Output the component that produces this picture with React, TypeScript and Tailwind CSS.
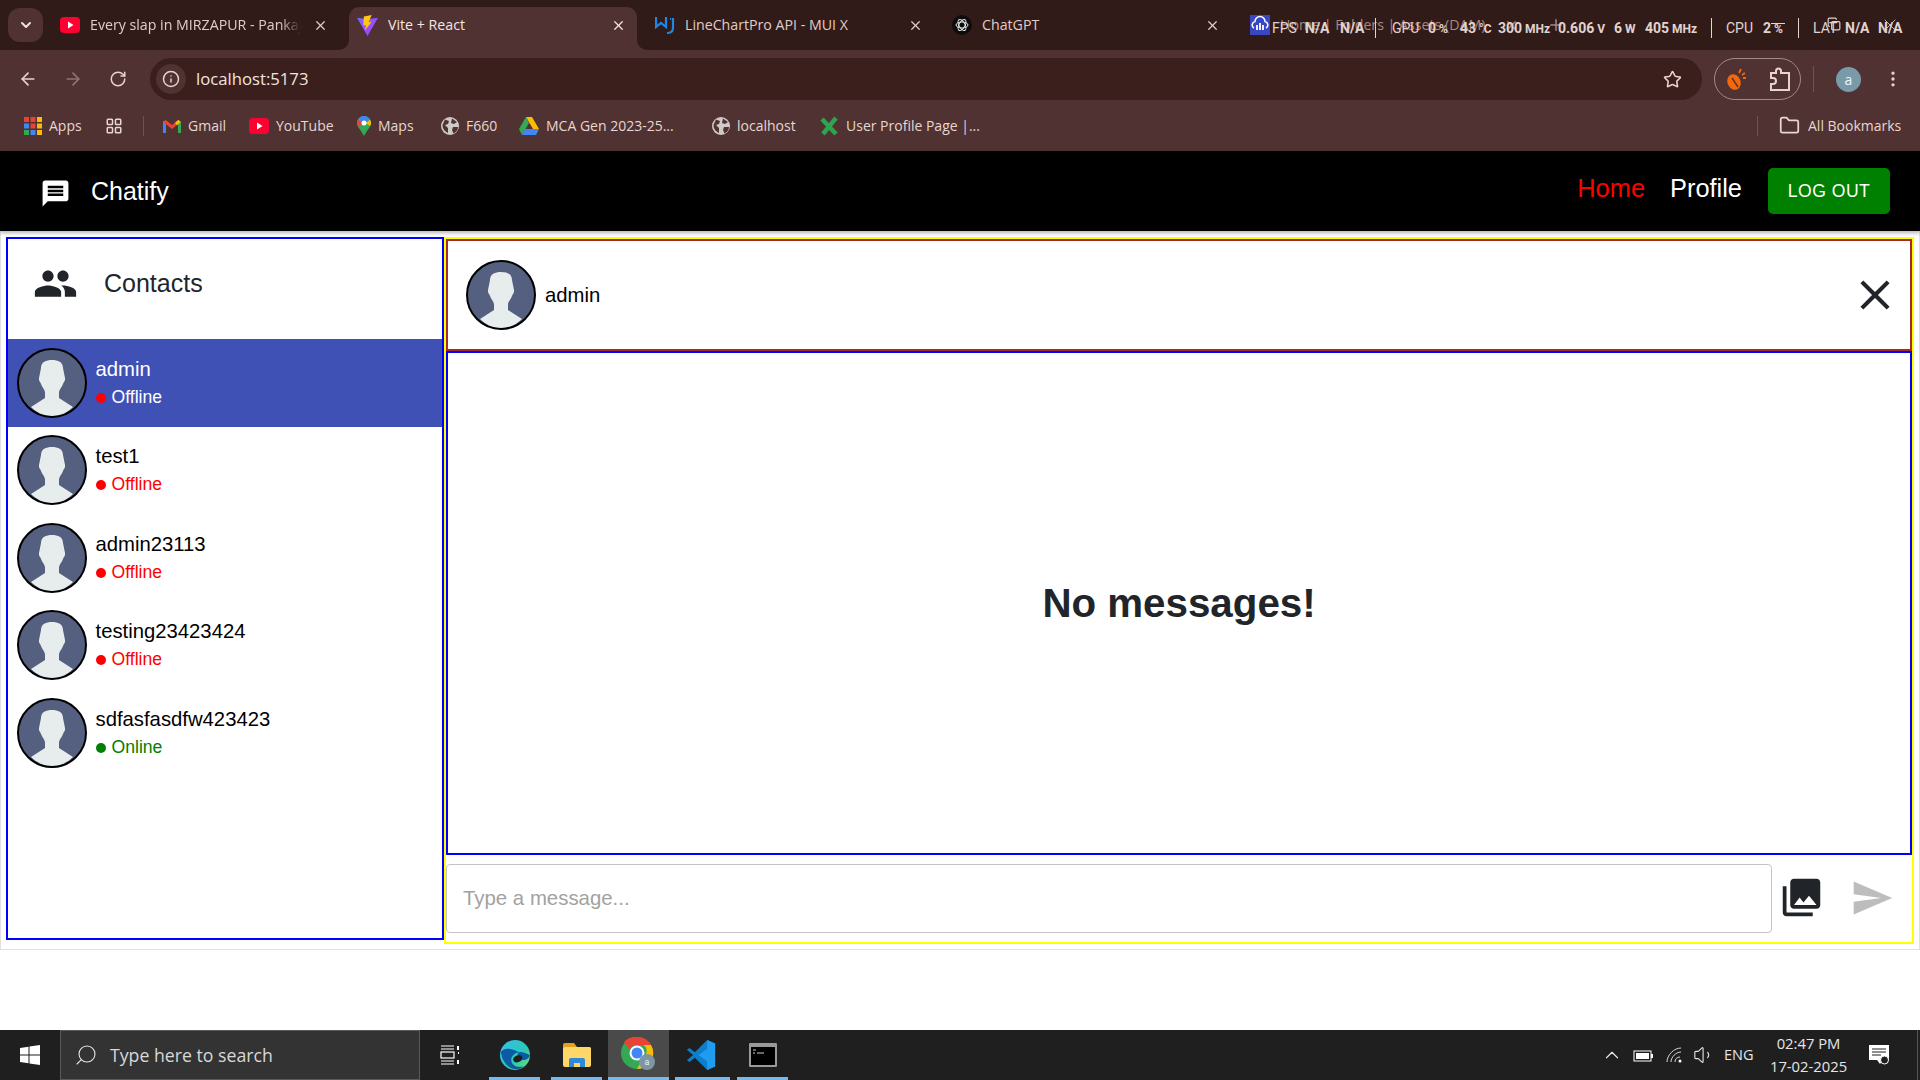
import React from "react";
import {
  ArrowLeft,
  ArrowRight,
  ChevronDown,
  ChevronUp,
  Copy,
  Folder,
  Info,
  LayoutGrid,
  MoreVertical,
  Plus,
  RotateCw,
  Search,
  Star,
  Volume1,
  X,
} from "lucide-react";

const UI_FONT = "font-['Open_Sans','Noto_Sans',sans-serif]";

const contacts = [
  { name: "admin", online: false, selected: true },
  { name: "test1", online: false },
  { name: "admin23113", online: false },
  { name: "testing23423424", online: false },
  { name: "sdfasfasdfw423423", online: true },
];

const YoutubeIcon = () => (
  <svg width="20" height="20" viewBox="0 0 20 20">
    <rect x="0" y="2" width="20" height="16" rx="4" fill="#ff0033" />
    <path d="M8 6.500v7l5.500-3.500z" fill="#fff" />
  </svg>
);

const ViteIcon = () => (
  <svg width="21" height="21" viewBox="0 0 20 20">
    <defs>
      <linearGradient id="vite-a" x1="0" y1="0" x2="1" y2="1">
        <stop offset="0" stopColor="#6f6cff" />
        <stop offset="1" stopColor="#bd34fe" />
      </linearGradient>
    </defs>
    <path d="M0 2.500 10 20 20 2.500 10 4z" fill="url(#vite-a)" />
    <path d="M14 0 6.500 1.500 6 10l2.500-.5-.8 5L14 6.500l-3 .5z" fill="#ffc517" />
  </svg>
);

const MuiIcon = () => (
  <svg width="20" height="20" viewBox="0 0 20 20" fill="none" stroke="#1e88e5" strokeWidth="2.2">
    <path d="M1 2v10l5-4 5 4V2" />
    <path d="M18 3v10c0 3-2 5-6 5" />
    <path d="M15 4h1" />
  </svg>
);

const GptIcon = () => (
  <svg width="20" height="20" viewBox="0 0 20 20" fill="none">
    <circle cx="10" cy="10" r="10" fill="#0d0d0d" />
    <g stroke="#e8e8e8" strokeWidth="1">
      <ellipse cx="10" cy="10" rx="6" ry="3" />
      <ellipse cx="10" cy="10" rx="6" ry="3" transform="rotate(60 10 10)" />
      <ellipse cx="10" cy="10" rx="6" ry="3" transform="rotate(120 10 10)" />
    </g>
  </svg>
);

const CloudIcon = () => (
  <svg width="20" height="20" viewBox="0 0 20 20">
    <rect width="20" height="20" fill="#3847c4" />
    <path d="M4 13a3.500 3.500 0 0 1 1-6.500 5 5 0 0 1 10 0 3.500 3.500 0 0 1 1 6.500" fill="none" stroke="#fff" strokeWidth="1.5" />
    <path d="M7 10v5M10 8v7M13 10v5" stroke="#fff" strokeWidth="1.8" />
  </svg>
);

const AppsIcon = () => (
  <svg width="18" height="18" viewBox="0 0 18 18">
    {["#ea4335", "#ea4335", "#fbbc04", "#4285f4", "#ea4335", "#fbbc04", "#34a853", "#4285f4", "#fbbc04"].map((c, i) => (
      <rect key={i} x={(i % 3) * 6.5} y={Math.floor(i / 3) * 6.5} width="5" height="5" fill={c} />
    ))}
  </svg>
);

const GmailIcon = () => (
  <svg width="18" height="16" viewBox="0 0 18 16" fill="none">
    <path d="M1.500 15V3" stroke="#4285f4" strokeWidth="3" />
    <path d="M16.500 15V3" stroke="#34a853" strokeWidth="3" />
    <path d="M1.500 3 9 9l7.500-6" stroke="#ea4335" strokeWidth="3" />
    <path d="M16.500 3 13 6" stroke="#fbbc04" strokeWidth="3" />
  </svg>
);

const MapsIcon = () => (
  <svg width="14" height="20" viewBox="0 0 14 20">
    <path d="M7 0a7 7 0 0 1 7 7c0 4-4 7-7 13C4 14 0 11 0 7a7 7 0 0 1 7-7z" fill="#34a853" />
    <path d="M7 0a7 7 0 0 1 6 3.500L2 10 1 4a7 7 0 0 1 6-4z" fill="#4285f4" />
    <path d="M1 3.500 5 7l-3 4a8 8 0 0 1-2-4 7 7 0 0 1 1-3.500z" fill="#ea4335" />
    <path d="M13 3.500a7 7 0 0 1 1 3.500c0 1-.3 2-1 3L9 7z" fill="#fbbc04" />
    <circle cx="7" cy="7" r="2.500" fill="#fff" />
  </svg>
);

const DriveIcon = () => (
  <svg width="20" height="18" viewBox="0 0 20 18">
    <path d="M7 0h6l7 12h-6z" fill="#fbbc04" />
    <path d="M7 0 0 12l3 6 7-12z" fill="#34a853" />
    <path d="M3 18h14l3-6H6z" fill="#4285f4" />
  </svg>
);

const XLogoIcon = () => (
  <svg width="20" height="20" viewBox="0 0 20 20" fill="none" stroke="#2ea44f" strokeWidth="4.5">
    <path d="M3 3l14 15" />
    <path d="M17 2 4 18" />
  </svg>
);

// the grey default favicon chrome shows for sites without one
const GlobeFilled = () => (
  <svg width="18" height="18" viewBox="0 0 18 18">
    <circle cx="9" cy="9" r="9" fill="#cfc9c8" />
    <path d="M4 2.500 8 4 7 7 4 8l3 3v5C3 14 1.500 11 1.500 8zM11 1.500l5 3.500-3 2-3-1zM12 10h5c0 3-2 5.500-4.500 6.500L11 13z" fill="#4f3231" />
  </svg>
);

const MetamaskIcon = () => (
  <svg width="22" height="24" viewBox="0 0 22 24">
    <ellipse cx="9" cy="15" rx="6.500" ry="8" fill="#f4680b" transform="rotate(-22 9 15)" />
    <path d="M7 11l6 9" stroke="#4f3231" strokeWidth="1.4" />
    <path d="M14 6l2-4M17 8l3-2M18 11h3" stroke="#f4680b" strokeWidth="1.8" />
  </svg>
);

const PuzzleIcon = () => (
  <svg width="20" height="24" viewBox="0 0 20 24" fill="none" stroke="#e8d3ce" strokeWidth="2">
    <path d="M1 6h5V4a2.500 2.500 0 0 1 5 0v2h8v17H1v-6h2a3 3 0 0 0 0-6H1z" />
  </svg>
);

const WinLogo = () => (
  <svg width="20" height="20" viewBox="0 0 20 20" fill="#fff">
    <path d="M0 3 8.500 1.800V9.500H0zM9.500 1.600 20 0v9.500H9.500zM0 10.500h8.500v7.700L0 17zM9.500 10.500H20V20L9.500 18.400z" />
  </svg>
);

const TaskViewIcon = () => (
  <svg width="20" height="20" viewBox="0 0 20 20" fill="none" stroke="#fff" strokeWidth="1.2">
    <path d="M1 1h13M1 4h13M1 16h13M1 19h13" />
    <rect x="1" y="7" width="13" height="6" />
    <path d="M18 1v4M18 8h1M18 15v4" strokeWidth="2" />
  </svg>
);

const EdgeIcon = () => (
  <svg width="30" height="30" viewBox="0 0 32 32">
    <defs>
      <linearGradient id="edge-a" x1="0" y1="0" x2="1" y2="1">
        <stop offset="0" stopColor="#35c1f1" />
        <stop offset="0.6" stopColor="#2bc7b3" />
        <stop offset="1" stopColor="#78e26c" />
      </linearGradient>
    </defs>
    <circle cx="16" cy="16" r="16" fill="url(#edge-a)" />
    <path d="M1 13C3 28 16 36 26 28c-8 2-14-1-14-7 0-5 6-9 12-8 4 1 8 3 8 3C29 26 14 20 20 13 12 8 3 8 1 13z" fill="#0c59a4" />
    <ellipse cx="19" cy="20" rx="5" ry="3.500" fill="#1e1e1e" transform="rotate(-25 19 20)" />
  </svg>
);

const FolderIcon = () => (
  <svg width="28" height="24" viewBox="0 0 28 24">
    <path d="M0 2a2 2 0 0 1 2-2h9l3 4h12a2 2 0 0 1 2 2v4H0z" fill="#e2a21f" />
    <rect y="4" width="28" height="20" rx="2" fill="#ffd768" />
    <path d="M6 17a2 2 0 0 1 2-2h12a2 2 0 0 1 2 2v7h-5v-4h-6v4H6z" fill="#2f88d8" />
  </svg>
);

const ChromeIcon = () => (
  <svg width="36" height="36" viewBox="0 0 36 36">
    <circle cx="16" cy="16" r="16" fill="#34a853" />
    <path d="M16 0a16 16 0 0 1 14 8H16a8 8 0 0 0-7.500 5L3 5a16 16 0 0 1 13-5z" fill="#ea4335" />
    <path d="M30 8a16 16 0 0 1-14 24l7-12a8 8 0 0 0 0-12z" fill="#fbbc04" />
    <circle cx="16" cy="16" r="7.500" fill="#fff" />
    <circle cx="16" cy="16" r="5.500" fill="#4285f4" />
    <circle cx="26" cy="25" r="8" fill="#7d95a4" />
    <text x="26" y="28" fontSize="9" textAnchor="middle" fill="#e8eef2" fontFamily="Roboto, sans-serif">a</text>
  </svg>
);

const VscodeIcon = () => (
  <svg width="30" height="30" viewBox="0 0 32 34" className="mr-[4px]">
    <path d="M23 0 32 4v26l-9 4L9 20l-6 5-3-2 7-6-7-6 3-2 6 5z" fill="#0b7fcc" />
    <path d="M23 0 32 4v26l-9 4V24L13 17l10-7z" fill="#1f9cf0" />
  </svg>
);

const TerminalIcon = () => (
  <svg width="28" height="24" viewBox="0 0 28 24">
    <rect width="28" height="24" rx="1" fill="#9a9a9a" />
    <rect x="2" y="4" width="24" height="18" fill="#000" />
    <path d="M4 7h3M4 10h2M8 10h7" stroke="#ccc" strokeWidth="1" />
  </svg>
);

const NotificationIcon = () => (
  <svg width="20" height="20" viewBox="0 0 20 20">
    <path d="M0 0h20v15h-6l-3 4-3-4H0z" fill="#fff" />
    <path d="M3 4h14M3 7h14M3 10h9" stroke="#1f1f1f" strokeWidth="1" />
    <circle cx="15.500" cy="15" r="4" fill="#1f1f1f" stroke="#fff" strokeWidth="1" />
  </svg>
);

const MuiPath = ({ d, size, className }: { d: string; size: string; className: string }) => (
  <svg viewBox="0 0 24 24" className={`${size} ${className} shrink-0`} fill="currentColor">
    <path d={d} />
  </svg>
);

const Avatar = () => (
  <div className="w-[70px] h-[70px] rounded-full border-2 border-black overflow-hidden bg-[#555f7f] shrink-0">
    <svg viewBox="0 0 66 66" className="w-full h-full">
      <path
        d="M22 18c0-6 5-8 11-8s11 2 11 8l2 10c.5 3-1.500 4-2 6-.8 3-3.500 5-4 8v6l14 9c-5 5-12 9-21 9s-16-4-21-9l14-9v-6c-.5-3-3.200-5-4-8-.5-2-2.500-3-2-6z"
        fill="#e7eced"
      />
    </svg>
  </div>
);

type TabProps = {
  className: string;
  closeClass: string;
  icon: React.ReactNode;
  title: string;
  active?: boolean;
  fade?: boolean;
  dim?: boolean;
};

const Tab = ({ className, closeClass, icon, title, active, fade, dim }: TabProps) => (
  <div
    className={`relative h-[43px] mt-[7px] pb-[7px] flex items-center shrink-0 ${className} ${
      active ? "bg-[#4f3231] rounded-t-[10px] text-[#f5e6e3]" : dim ? "text-[#a8877f]" : "text-[#e2cbc6]"
    }`}
  >
    {active && (
      <>
        <svg width="10" height="10" viewBox="0 0 10 10" className="absolute left-[-10px] bottom-0">
          <path d="M10 0v10H0a10 10 0 0 0 10-10z" fill="#4f3231" />
        </svg>
        <svg width="10" height="10" viewBox="0 0 10 10" className="absolute right-[-10px] bottom-0">
          <path d="M0 0v10h10A10 10 0 0 1 0 0z" fill="#4f3231" />
        </svg>
      </>
    )}
    {icon}
    <span
      className={`ml-[10px] text-[14.2px] whitespace-nowrap overflow-hidden flex-1 ${
        fade ? "[mask-image:linear-gradient(to_right,black_90%,transparent)]" : ""
      }`}
    >
      {title}
    </span>
    <X size={15} strokeWidth={2} className={`shrink-0 ml-[12px] ${closeClass}`} />
  </div>
);

const Bookmark = ({ icon, label, className }: { icon: React.ReactNode; label: string; className: string }) => (
  <div className={`flex items-center shrink-0 ${className}`}>
    {icon}
    <span className="ml-[7px] text-[14px] whitespace-nowrap text-[#e8d6d2]">{label}</span>
  </div>
);

const Stat = ({ className, text, unit, bold }: { className: string; text: string; unit?: string; bold?: boolean }) => (
  <span className={`shrink-0 whitespace-nowrap text-[14px] ${bold ? "font-bold" : ""} ${className}`}>
    {text}
    {unit && <span className="ml-[3px] text-[12px]">{unit}</span>}
  </span>
);

// hardware monitor strip that sits on top of the last browser tab
const HardwareOverlay = () => (
  <div className="absolute left-[1272px] top-[17px] h-[22px] flex items-center text-[#e0d3d0] font-['Roboto',sans-serif]">
    <Stat className="w-[33px]" text="FPS" />
    <Stat className="w-[35px]" text="N/A" bold />
    <Stat className="w-[35px]" text="N/A" bold />
    <span className="w-px h-[20px] bg-[#e0d3d0] mr-[16px]" />
    <Stat className="w-[36px]" text="GPU" />
    <Stat className="w-[32px]" text="0" unit="%" bold />
    <Stat className="w-[38px]" text="43" unit="°C" bold />
    <Stat className="w-[60px]" text="300" unit="MHz" bold />
    <Stat className="w-[56px]" text="0.606" unit="V" bold />
    <Stat className="w-[31px]" text="6" unit="W" bold />
    <Stat className="w-[66px]" text="405" unit="MHz" bold />
    <span className="w-px h-[20px] bg-[#e0d3d0] mr-[14px]" />
    <Stat className="w-[37px]" text="CPU" />
    <Stat className="w-[35px]" text="2" unit="%" bold />
    <span className="w-px h-[20px] bg-[#e0d3d0] mr-[14px]" />
    <Stat className="w-[32px]" text="LAT" />
    <Stat className="w-[33px]" text="N/A" bold />
    <Stat className="w-[30px]" text="N/A" bold />
  </div>
);

const BrowserChrome = () => (
  <div className={`${UI_FONT} shrink-0`}>
    <div className="relative h-[50px] bg-[#311b18] flex pl-[8px]">
      <div className="mt-[8px] w-[35px] h-[34px] rounded-[12px] bg-[#4f3231] flex items-center justify-center text-[#f0e0dc] mr-[9px] shrink-0">
        <ChevronDown size={16} strokeWidth={3} />
      </div>
      <Tab className="w-[297px] pl-[8px]" closeClass="mr-[21px]" icon={<YoutubeIcon />} title="Every slap in MIRZAPUR - Pankaj Tripathi" fade />
      <Tab className="w-[288px] pl-[8px]" closeClass="mr-[11px]" icon={<ViteIcon />} title="Vite + React" active />
      <Tab className="w-[303px] pl-[18px]" closeClass="mr-[17px]" icon={<MuiIcon />} title="LineChartPro API - MUI X" />
      <Tab className="w-[295px] pl-[12px]" closeClass="mr-[15px]" icon={<GptIcon />} title="ChatGPT" />
      <Tab className="w-[300px] pl-[15px]" closeClass="mr-[16px]" icon={<CloudIcon />} title="Home | Folders | Assets (DAM)" dim />
      <Plus size={18} className="mt-[16px] ml-[12px] text-[#a8877f]" />
      <HardwareOverlay />
      <div className="absolute left-[1771px] top-[23px] w-[14px] h-px bg-[#e0d3d0]" />
      <Copy size={14} className="absolute left-[1827px] top-[17px] text-[#e0d3d0]" />
      <X size={20} strokeWidth={1} className="absolute left-[1880px] top-[15px] text-[#e0d3d0]" />
    </div>

    <div className="h-[50px] bg-[#4f3231] flex items-end text-[#e8d3ce]">
      <div className="h-[42px] w-[150px] flex items-center shrink-0">
        <ArrowLeft size={20} className="ml-[18px]" />
        <ArrowRight size={20} className="ml-[25px] text-[#8f7672]" />
        <RotateCw size={18} className="ml-[26px]" />
      </div>
      <div className="h-[42px] w-[1552px] rounded-full bg-[#3a1f1c] flex items-center shrink-0">
        <div className="w-[30px] h-[30px] ml-[6px] rounded-full bg-[#4f3231] flex items-center justify-center">
          <Info size={18} />
        </div>
        <span className="ml-[10px] text-[16.7px] text-[#f3e4e0]">localhost:5173</span>
        <Star size={19} className="ml-auto mr-[20px]" />
      </div>
      <div className="ml-[12px] h-[42px] w-[87px] rounded-full border border-[#a08a86] flex items-center shrink-0">
        <span className="ml-[10px]">
          <MetamaskIcon />
        </span>
        <span className="ml-[23px]">
          <PuzzleIcon />
        </span>
      </div>
      <div className="h-[42px] flex items-center">
        <span className="w-px h-[26px] bg-[#6e5450] ml-[12px]" />
        <div className="ml-[22px] w-[25px] h-[25px] rounded-full bg-[#7a9aaa] text-[#f0f5f7] text-[14px] flex items-center justify-center">
          a
        </div>
        <MoreVertical size={20} className="ml-[22px]" />
      </div>
    </div>

    <div className="h-[51px] bg-[#4f3231] flex items-center">
      <Bookmark className="ml-[24px] w-[81px]" icon={<AppsIcon />} label="Apps" />
      <LayoutGrid size={18} className="text-[#e8d6d2] shrink-0" />
      <span className="ml-[20px] w-px h-[20px] bg-[#6e5450] shrink-0" />
      <Bookmark className="ml-[19px] w-[86px]" icon={<GmailIcon />} label="Gmail" />
      <Bookmark className="w-[108px]" icon={<YoutubeIcon />} label="YouTube" />
      <Bookmark className="w-[84px]" icon={<MapsIcon />} label="Maps" />
      <Bookmark className="w-[78px]" icon={<GlobeFilled />} label="F660" />
      <Bookmark className="w-[193px]" icon={<DriveIcon />} label="MCA Gen 2023-25..." />
      <Bookmark className="w-[107px]" icon={<GlobeFilled />} label="localhost" />
      <Bookmark className="w-[200px]" icon={<XLogoIcon />} label="User Profile Page |..." />
      <span className="ml-[738px] w-px h-[20px] bg-[#6e5450] shrink-0" />
      <Bookmark className="ml-[21px]" icon={<Folder size={21} className="text-[#e8d6d2] mr-[1px]" />} label="All Bookmarks" />
    </div>
  </div>
);

const Navbar = () => (
  <header className="h-[80px] bg-black flex items-center shrink-0 relative shadow-[0_2px_4px_rgba(0,0,0,0.3)] text-white">
    <MuiPath
      size="w-[31px] h-[31px]"
      className="ml-[40px] mt-[4px]"
      d="M20 2H4c-1.100 0-1.990.9-1.990 2L2 22l4-4h14c1.100 0 2-.9 2-2V4c0-1.100-.9-2-2-2zm-2 12H6v-2h12v2zm0-3H6V9h12v2zm0-3H6V6h12v2z"
    />
    <span className="ml-[20px] text-[25px] mt-[2px]">Chatify</span>
    <nav className="ml-auto flex items-center">
      <span className="text-[25.4px] text-[#ff0000] mb-[5px]">Home</span>
      <span className="ml-[25px] text-[25.4px] mb-[5px]">Profile</span>
      <button className="ml-[26px] mr-[30px] w-[122px] h-[46px] rounded-[5px] bg-[#008000] text-[17.6px] tracking-[0.5px] flex items-center justify-center">
        LOG OUT
      </button>
    </nav>
  </header>
);

const ContactRow = ({ name, online, selected }: { name: string; online: boolean; selected?: boolean }) => (
  <div className={`h-[87.5px] flex items-center pl-[9px] ${selected ? "bg-[#3f51b5]" : ""}`}>
    <Avatar />
    <div className="ml-[8.5px] flex flex-col">
      <span className={`text-[20.3px] leading-[28px] ${selected ? "text-white" : "text-black"}`}>{name}</span>
      <div className="flex items-center leading-[28px]">
        <span className={`w-[10px] h-[10px] rounded-full mt-[2px] ${online ? "bg-[#008000]" : "bg-[#ff0000]"}`} />
        <span className={`ml-[6px] text-[17.6px] ${selected ? "text-white" : online ? "text-[#008000]" : "text-[#ff0000]"}`}>
          {online ? "Online" : "Offline"}
        </span>
      </div>
    </div>
  </div>
);

const ContactsPanel = () => (
  <aside className="w-[438px] h-[703px] border-2 border-[#0000ff] shrink-0">
    <div className="h-[100px] flex items-center pb-[11px] text-[#212529]">
      <MuiPath
        size="w-[45px] h-[45px]"
        className="ml-[25px]"
        d="M16 11c1.660 0 2.990-1.340 2.990-3S17.660 5 16 5c-1.660 0-3 1.340-3 3s1.340 3 3 3zm-8 0c1.660 0 2.990-1.340 2.990-3S9.660 5 8 5C6.340 5 5 6.340 5 8s1.340 3 3 3zm0 2c-2.330 0-7 1.170-7 3.500V19h14v-2.500c0-2.330-4.670-3.500-7-3.500zm8 0c-.29 0-.62.02-.97.05 1.160.84 1.970 1.970 1.970 3.450V19h6v-2.500c0-2.330-4.670-3.500-7-3.500z"
      />
      <span className="ml-[26px] text-[25px]">Contacts</span>
    </div>
    {contacts.map((c) => (
      <ContactRow key={c.name} name={c.name} online={c.online} selected={c.selected} />
    ))}
  </aside>
);

const ChatPanel = () => (
  <section className="w-[1470px] h-[707px] border-2 border-[#ffff00] flex flex-col shrink-0">
    <div className="h-[112px] border-2 border-[#a52a2a] flex items-center pl-[18px] pr-[18px] shrink-0">
      <Avatar />
      <span className="ml-[9px] text-[20.3px] text-black">admin</span>
      <MuiPath
        size="w-[50px] h-[50px]"
        className="ml-auto text-[#212529] mr-[-8px]"
        d="M19 6.410 17.590 5 12 10.590 6.410 5 5 6.410 10.590 12 5 17.590 6.410 19 12 13.410 17.590 19 19 17.590 13.410 12z"
      />
    </div>
    <div className="h-[504px] border-2 border-[#0000ff] flex items-center justify-center shrink-0">
      <span className="text-[40.3px] font-bold text-[#212529] mt-[2px]">No messages!</span>
    </div>
    <div className="flex items-start pt-[9px]">
      <input
        placeholder="Type a message..."
        className="w-[1326px] h-[69px] border border-[#c4c4c4] rounded-[4px] px-[16px] text-[20.4px] outline-none placeholder:text-[#a2a2a2]"
      />
      <MuiPath
        size="w-[45px] h-[45px]"
        className="ml-[7px] mt-[11px] text-[#212529]"
        d="M22 16V4c0-1.100-.9-2-2-2H8c-1.100 0-2 .9-2 2v12c0 1.100.9 2 2 2h12c1.100 0 2-.9 2-2zm-11-4 2.030 2.710L16 11l4 5H8l3-4zM2 6v14c0 1.100.9 2 2 2h14v-2H4V6H2z"
      />
      <MuiPath
        size="w-[44px] h-[44px]"
        className="ml-[26px] mt-[12px] text-[#bdbdbd]"
        d="M2.010 21 23 12 2.010 3 2 10l15 2-15 2z"
      />
    </div>
  </section>
);

const TaskbarApp = ({ children, className }: { children: React.ReactNode; className: string }) => (
  <div className={`relative h-[50px] flex items-center justify-center shrink-0 ${className}`}>
    {children}
    <span className="absolute left-0 right-0 bottom-0 h-[3px] bg-[#76b9ed]" />
  </div>
);

const Taskbar = () => (
  <footer className={`${UI_FONT} h-[50px] bg-[#1f1f1f] flex items-center shrink-0 text-[#e6e6e6]`}>
    <div className="w-[60px] flex justify-center shrink-0">
      <WinLogo />
    </div>
    <div className="w-[360px] h-[50px] bg-[#333333] border border-[#5a5a5a] flex items-center shrink-0">
      <Search size={24} strokeWidth={1.1} className="ml-[13px] -scale-x-100 text-[#e6e6e6]" />
      <span className="ml-[12px] text-[17.7px] text-[#d8d8d8]">Type here to search</span>
    </div>
    <div className="ml-[20px] w-[20px] shrink-0">
      <TaskViewIcon />
    </div>
    <TaskbarApp className="ml-[29px] w-[51px]">
      <EdgeIcon />
    </TaskbarApp>
    <TaskbarApp className="ml-[11px] w-[51px]">
      <FolderIcon />
    </TaskbarApp>
    <TaskbarApp className="ml-[6px] w-[61px] bg-[#4a4a4a]">
      <ChromeIcon />
    </TaskbarApp>
    <TaskbarApp className="ml-[6px] w-[55px]">
      <VscodeIcon />
    </TaskbarApp>
    <TaskbarApp className="ml-[7px] w-[51px]">
      <TerminalIcon />
    </TaskbarApp>
    <ChevronUp size={22} strokeWidth={1.3} className="ml-[813px] shrink-0" />
    <svg width="20" height="14" viewBox="0 0 20 14" className="ml-[10px] shrink-0" fill="none">
      <rect x="1" y="3" width="17" height="10" stroke="#fff" />
      <rect x="3" y="5" width="13" height="6" fill="#fff" />
      <rect x="18" y="6" width="2" height="4" fill="#fff" />
    </svg>
    <svg width="16" height="16" viewBox="0 0 16 16" className="ml-[13px] shrink-0" fill="none" stroke="#d8d8d8">
      <path d="M1 15C1 8 8 1 15 1M5 15c0-5 5-10 10-10M9 15c0-3 2-5 5-5" />
      <circle cx="14" cy="14" r="1.500" fill="#fff" stroke="none" />
    </svg>
    <Volume1 size={22} strokeWidth={1.2} className="ml-[11px] shrink-0" />
    <span className="ml-[9px] text-[14.5px] shrink-0">ENG</span>
    <div className="ml-[13px] w-[84px] flex flex-col items-center text-[14.8px] leading-[23px] shrink-0">
      <span>02:47 PM</span>
      <span className="whitespace-nowrap">17-02-2025</span>
    </div>
    <div className="ml-[18px] shrink-0">
      <NotificationIcon />
    </div>
    <span className="ml-[28px] w-px h-[50px] bg-[#555] shrink-0" />
  </footer>
);

export default function App() {
  return (
    <div className="w-full h-screen flex flex-col overflow-hidden bg-white font-['Liberation_Sans',Arial,sans-serif]">
      <BrowserChrome />
      <Navbar />
      <main className="h-[719px] border-x border-b border-[#e0e0e0] flex items-start pt-[6px] pl-[5px] shrink-0">
        <ContactsPanel />
        <ChatPanel />
      </main>
      <div className="flex-1" />
      <Taskbar />
    </div>
  );
}
